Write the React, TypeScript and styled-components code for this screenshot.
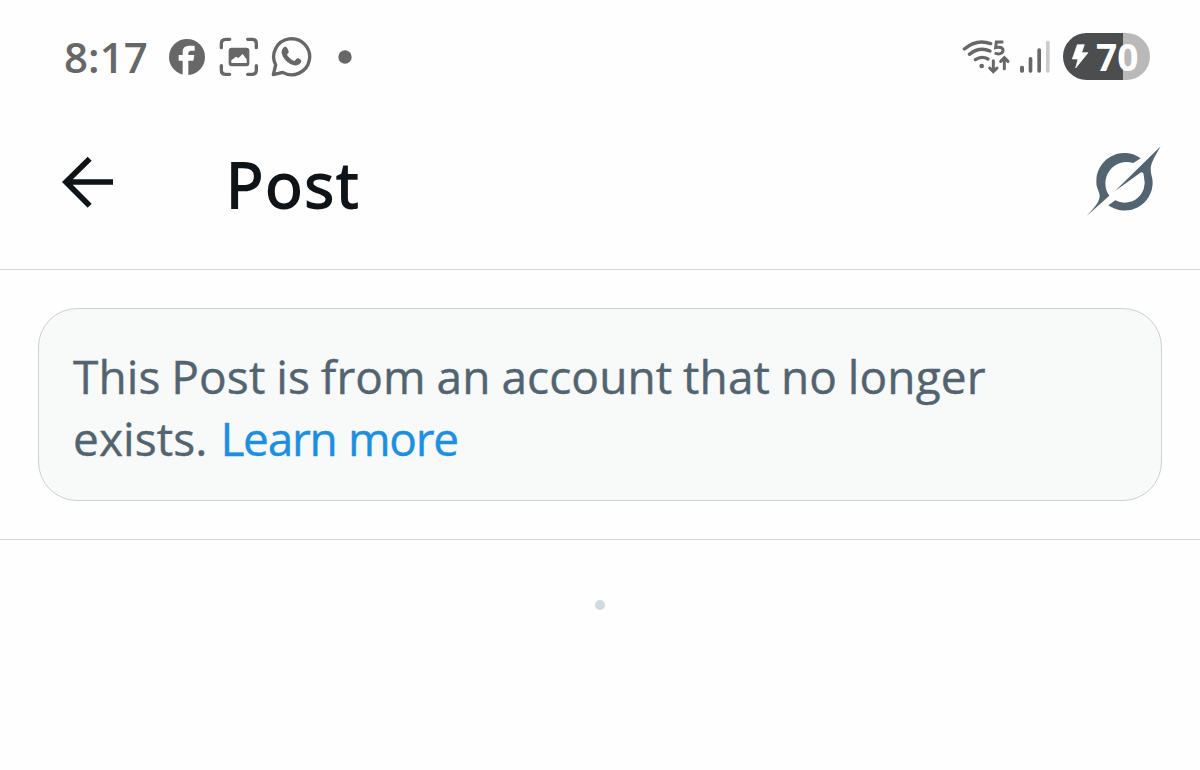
import styled, { createGlobalStyle } from "styled-components";

const GlobalStyle = createGlobalStyle`
  body {
    margin: 0;
    background-color: #fefefe;
    font-family: "Open Sans", "Noto Sans", sans-serif;
  }
`;

const Screen = styled.div`
  display: flex;
  flex-direction: column;
  min-height: 770px;
  overflow: hidden;
`;

const StatusBar = styled.div`
  display: flex;
  align-items: center;
  justify-content: space-between;
  height: 113px;
  padding: 0 50px 0 64px;
  box-sizing: border-box;
`;

const StatusGroup = styled.div`
  display: flex;
  align-items: center;
`;

const Time = styled.span`
  width: 104px;
  font-size: 42px;
  line-height: 50px;
  font-weight: 600;
  letter-spacing: 0.1px;
  color: #666766;
  white-space: nowrap;
`;

const Icon = styled.svg<{ $right?: number }>`
  display: block;
  flex: none;
  margin-right: ${({ $right }) => $right ?? 0}px;
`;

const Battery = styled.div`
  display: flex;
  align-items: center;
  width: 87px;
  height: 47px;
  border-radius: 24px;
  background: linear-gradient(to right, #4b4d4e 60px, #b9b9b9 60px);
`;

const BatteryLevel = styled.span`
  font-size: 37px;
  line-height: 46px;
  font-weight: 700;
  color: white;
`;

const Header = styled.header`
  display: flex;
  align-items: center;
  height: 157px;
  padding: 0 38px 19px 62px;
  box-sizing: border-box;
  border-bottom: 1px solid #d2d5d9;
`;

const Title = styled.h1`
  flex: 1;
  margin: 5px 0 0 110px;
  font-size: 62px;
  line-height: 80px;
  font-weight: 400;
  letter-spacing: 2px;
  color: #0f1419;
  -webkit-text-stroke: 1.8px #0f1419;
`;

const Content = styled.main`
  padding: 38px;
  border-bottom: 1px solid #d2d5d9;
`;

const Notice = styled.div`
  height: 193px;
  padding: 36px 34px;
  box-sizing: border-box;
  border: 1px solid #cbd0d5;
  border-radius: 39px;
  background-color: #f8f9f9;
`;

const NoticeText = styled.p`
  margin: 0;
  font-size: 46px;
  line-height: 62px;
  letter-spacing: 0.1px;
  word-spacing: -1.2px;
  color: #536471;
  white-space: nowrap;
  -webkit-text-stroke: 0.4px currentColor;
`;

const Link = styled.a`
  margin-left: 2px;
  letter-spacing: -1.3px;
  word-spacing: 1px;
  color: #1d8fe0;
  cursor: pointer;
`;

const EndDot = styled.div`
  width: 10px;
  height: 10px;
  margin: 60px auto 0;
  border-radius: 50%;
  background-color: #cfd9e1;
`;

const FacebookIcon = () => (
  <Icon $right={13} width="38" height="38" viewBox="354 38 114 114">
    <circle cx="411" cy="95" r="54" fill="#666766" />
    <path
      d="M398 153V106H386V89H398V79Q398 61 418 61H434V76H424Q415 76 415 84V89H433L430 106H415V153Z"
      fill="#fefefe"
    />
  </Icon>
);

const CaptureIcon = () => (
  <Icon $right={12} width="40" height="40" viewBox="43 36 120 120">
    <g fill="none" stroke="#666766" strokeWidth="10" strokeLinecap="round">
      <path d="M50 68V56Q50 43 63 43H75M129 43H142Q155 43 155 56V68M155 122V135Q155 148 142 148H129M75 148H63Q50 148 50 135V122" />
    </g>
    <rect x="72" y="68" width="62" height="56" rx="9" fill="#666766" />
    <path
      d="M80 114V106L94 95L101 99L114 87L126 103V114Z"
      fill="#fefefe"
    />
  </Icon>
);

const WhatsappIcon = () => (
  <Icon $right={26} width="41" height="42" viewBox="199 35 123 126">
    <path
      d="M206 151L213 122A54 54 0 1 1 234 144Z"
      fill="none"
      stroke="#666766"
      strokeWidth="10"
      strokeLinejoin="round"
    />
    <path
      d="M239 68C243 66 246 68 248 72L252 81C253 85 249 88 247 91C252 100 260 106 269 110L276 103C278 101 281 102 284 103L288 106C291 108 290 113 287 117C280 125 268 125 257 119C244 112 235 101 232 90C229 81 233 72 239 68Z"
      fill="#666766"
    />
  </Icon>
);

const MoreDot = () => (
  <Icon width="14" height="14" viewBox="0 0 14 14">
    <circle cx="7" cy="7" r="6.7" fill="#666766" />
  </Icon>
);

const WifiIcon = () => (
  <Icon $right={9} width="49" height="38" viewBox="21 42 147 114">
    <g fill="none" stroke="#666766" strokeWidth="10" strokeLinecap="round">
      <path d="M28 75Q65 44 107 59" />
      <path d="M43 91Q73 67 105 81" />
      <path d="M61 107Q80 94 99 105" />
      <path d="M115 110V142M104 132L115 143L126 132" strokeWidth="9" />
      <path d="M148 134V103M137 112L148 101L159 112" strokeWidth="9" />
      <path
        d="M145 54H124L122 71C134 67 144 71 144 79C144 90 130 92 119 87"
        strokeWidth="9"
        strokeLinecap="butt"
      />
    </g>
    <circle cx="80" cy="126" r="7" fill="#666766" />
  </Icon>
);

const SignalIcon = () => (
  <Icon $right={12} width="31" height="34" viewBox="198 43 93 102">
    <g fill="#666766">
      <rect x="198" y="120" width="12" height="21" rx="5" />
      <rect x="224" y="94" width="11" height="47" rx="5" />
      <rect x="250" y="68" width="11" height="73" rx="5" />
    </g>
    <rect x="276" y="45" width="11" height="96" rx="5" fill="#cbcbcb" />
  </Icon>
);

const BoltIcon = () => (
  <Icon width="33" height="30" viewBox="24 52 99 90">
    <path
      d="M67 60H88L80 84H99L62 130L69 103H52Z"
      fill="white"
      stroke="white"
      strokeWidth="2"
      strokeLinejoin="round"
    />
  </Icon>
);

const BackIcon = () => (
  <Icon width="54" height="54" viewBox="36 45 162 162">
    <path
      d="M189 126H50M119 56L48 126L119 197"
      fill="none"
      stroke="#0f1419"
      strokeWidth="17"
    />
  </Icon>
);

const GrokIcon = () => (
  <Icon width="76" height="72" viewBox="6 2 228 216">
    <g fill="#536471">
      <path d="M170 39A84 84 0 0 0 37 111C37 130 47 139 47 153C46 172 28 191 8 212L76 151A64 64 0 0 1 148 53Z" />
      <path d="M230 3L93 137L168 83C176 78 179 83 180 96A60 60 0 0 1 94 165L73 180A84 84 0 0 0 206 111C206 98 200 87 200 72C200 52 215 30 230 3Z" />
    </g>
  </Icon>
);

export default function App() {
  return (
    <Screen>
      <GlobalStyle />
      <StatusBar>
        <StatusGroup>
          <Time>8:17</Time>
          <FacebookIcon />
          <CaptureIcon />
          <WhatsappIcon />
          <MoreDot />
        </StatusGroup>
        <StatusGroup>
          <WifiIcon />
          <SignalIcon />
          <Battery>
            <BoltIcon />
            <BatteryLevel>70</BatteryLevel>
          </Battery>
        </StatusGroup>
      </StatusBar>
      <Header>
        <BackIcon />
        <Title>Post</Title>
        <GrokIcon />
      </Header>
      <Content>
        <Notice>
          <NoticeText>
            This Post is from an account that no longer
            <br />
            exists. <Link>Learn more</Link>
          </NoticeText>
        </Notice>
      </Content>
      <EndDot />
    </Screen>
  );
}
